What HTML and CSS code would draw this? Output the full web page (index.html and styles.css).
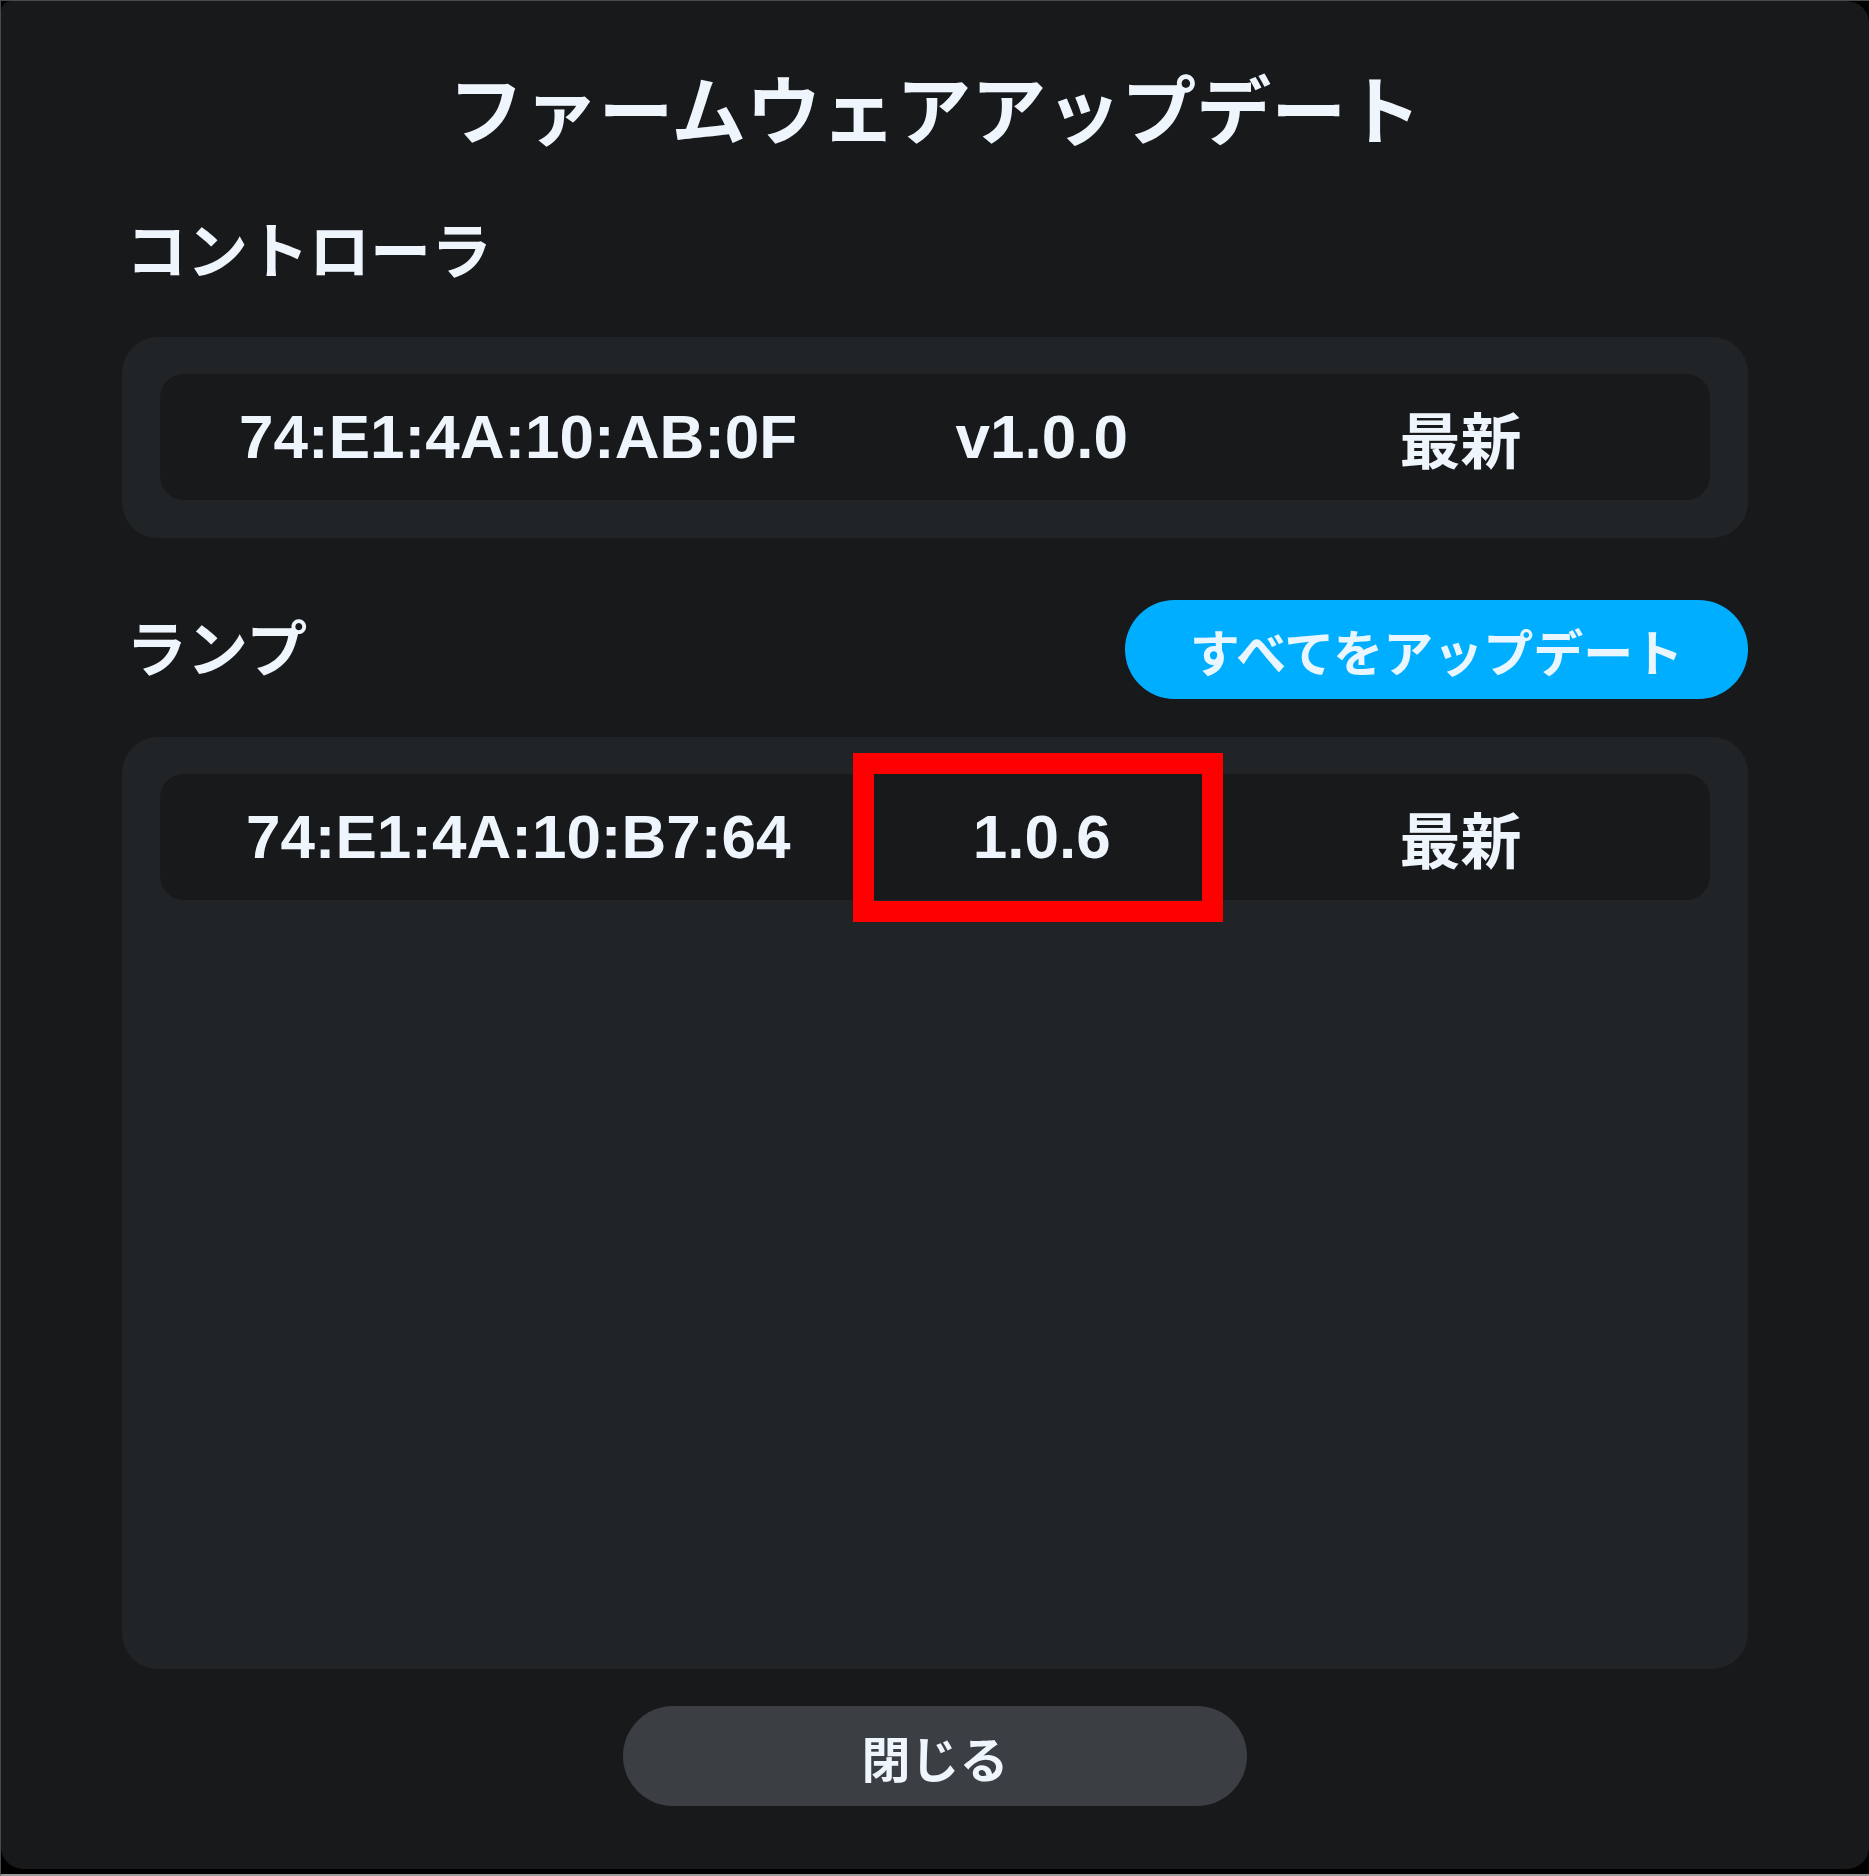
FILE: index.html
```html
<!DOCTYPE html>
<html lang="ja">
<head>
<meta charset="utf-8">
<title>ファームウェアアップデート</title>
<link rel="stylesheet" href="styles.css">
</head>
<body>
<div class="frame">
  <div class="dialog">
    <h1 class="title">ファームウェアアップデート</h1>

    <div class="section-head">
      <h2 class="section-label">コントローラ</h2>
    </div>
    <div class="card card-controller">
      <div class="device-row">
        <span class="cell">74:E1:4A:10:AB:0F</span>
        <span class="cell">v1.0.0</span>
        <span class="cell">最新</span>
      </div>
    </div>

    <div class="section-head section-head-lamp">
      <h2 class="section-label">ランプ</h2>
      <button class="btn-update-all" type="button">すべてをアップデート</button>
    </div>
    <div class="card card-lamp">
      <div class="device-row">
        <span class="cell">74:E1:4A:10:B7:64</span>
        <span class="cell">1.0.6</span>
        <span class="cell">最新</span>
        <div class="highlight-box"></div>
      </div>
    </div>

    <div class="footer">
      <button class="btn-close" type="button">閉じる</button>
    </div>
  </div>
</div>
</body>
</html>
```
FILE: styles.css
```css
* {
  box-sizing: border-box;
}

html, body {
  margin: 0;
  padding: 0;
  background: #000;
}

body {
  font-family: "Liberation Sans", "Noto Sans CJK JP", sans-serif;
  color: #eef5fc;
}

.frame {
  width: 1869px;
  height: 1876px;
  border-top: 1px solid #4a4a4a;
  border-left: 1px solid #4a4a4a;
  border-bottom: 2px solid #9a9a9a;
  background: #000;
}

.dialog {
  width: 1868px;
  height: 1868px;
  background: #18191b;
  border-radius: 10px 22px 22px 22px;
  padding: 56px 121px 0 121px;
  display: flex;
  flex-direction: column;
}

.title {
  margin: 0;
  font-family: "Noto Sans CJK JP", sans-serif;
  font-size: 75px;
  font-weight: 700;
  line-height: 100px;
  text-align: center;
  letter-spacing: 0;
}

.section-head {
  display: flex;
  align-items: center;
  justify-content: space-between;
  margin-top: 55px;
  height: 80px;
}

.section-head-lamp {
  margin-top: 62px;
  height: 99px;
}

.section-label {
  margin: 0;
  padding-left: 4px;
  font-family: "Noto Sans CJK JP", sans-serif;
  font-size: 61px;
  font-weight: 700;
  line-height: 80px;
  position: relative;
  top: -4px;
}

.card {
  background: #212426;
  border-radius: 36px;
  padding: 37px 38px 38px 38px;
}

.card-controller {
  margin-top: 45px;
}

.card-lamp {
  margin-top: 38px;
  height: 932px;
}

.device-row {
  position: relative;
  height: 126px;
  background: #18191b;
  border-radius: 24px;
  display: grid;
  grid-template-columns: 3fr 2fr 2fr;
  align-items: center;
  padding: 0 40px 0 44px;
  font-size: 62px;
  font-weight: 700;
  line-height: 1;
}

.cell {
  text-align: center;
  white-space: nowrap;
}

.cell:last-of-type {
  font-family: "Noto Sans CJK JP", sans-serif;
  font-size: 61px;
}

.highlight-box {
  position: absolute;
  left: 693px;
  top: -21px;
  width: 370px;
  height: 169px;
  border: 21px solid #ff0000;
  pointer-events: none;
}

.btn-update-all {
  width: 623px;
  height: 99px;
  border: none;
  border-radius: 50px;
  background: #00aeff;
  color: #eaf6ff;
  font-family: "Noto Sans CJK JP", sans-serif;
  font-size: 50px;
  font-weight: 700;
  padding: 0;
}

.footer {
  margin-top: 37px;
  display: flex;
  justify-content: center;
}

.btn-close {
  width: 624px;
  height: 100px;
  border: none;
  border-radius: 50px;
  background: #3b3e42;
  color: #eef5fc;
  font-family: "Noto Sans CJK JP", sans-serif;
  font-size: 49px;
  font-weight: 700;
  padding: 0;
}
```
